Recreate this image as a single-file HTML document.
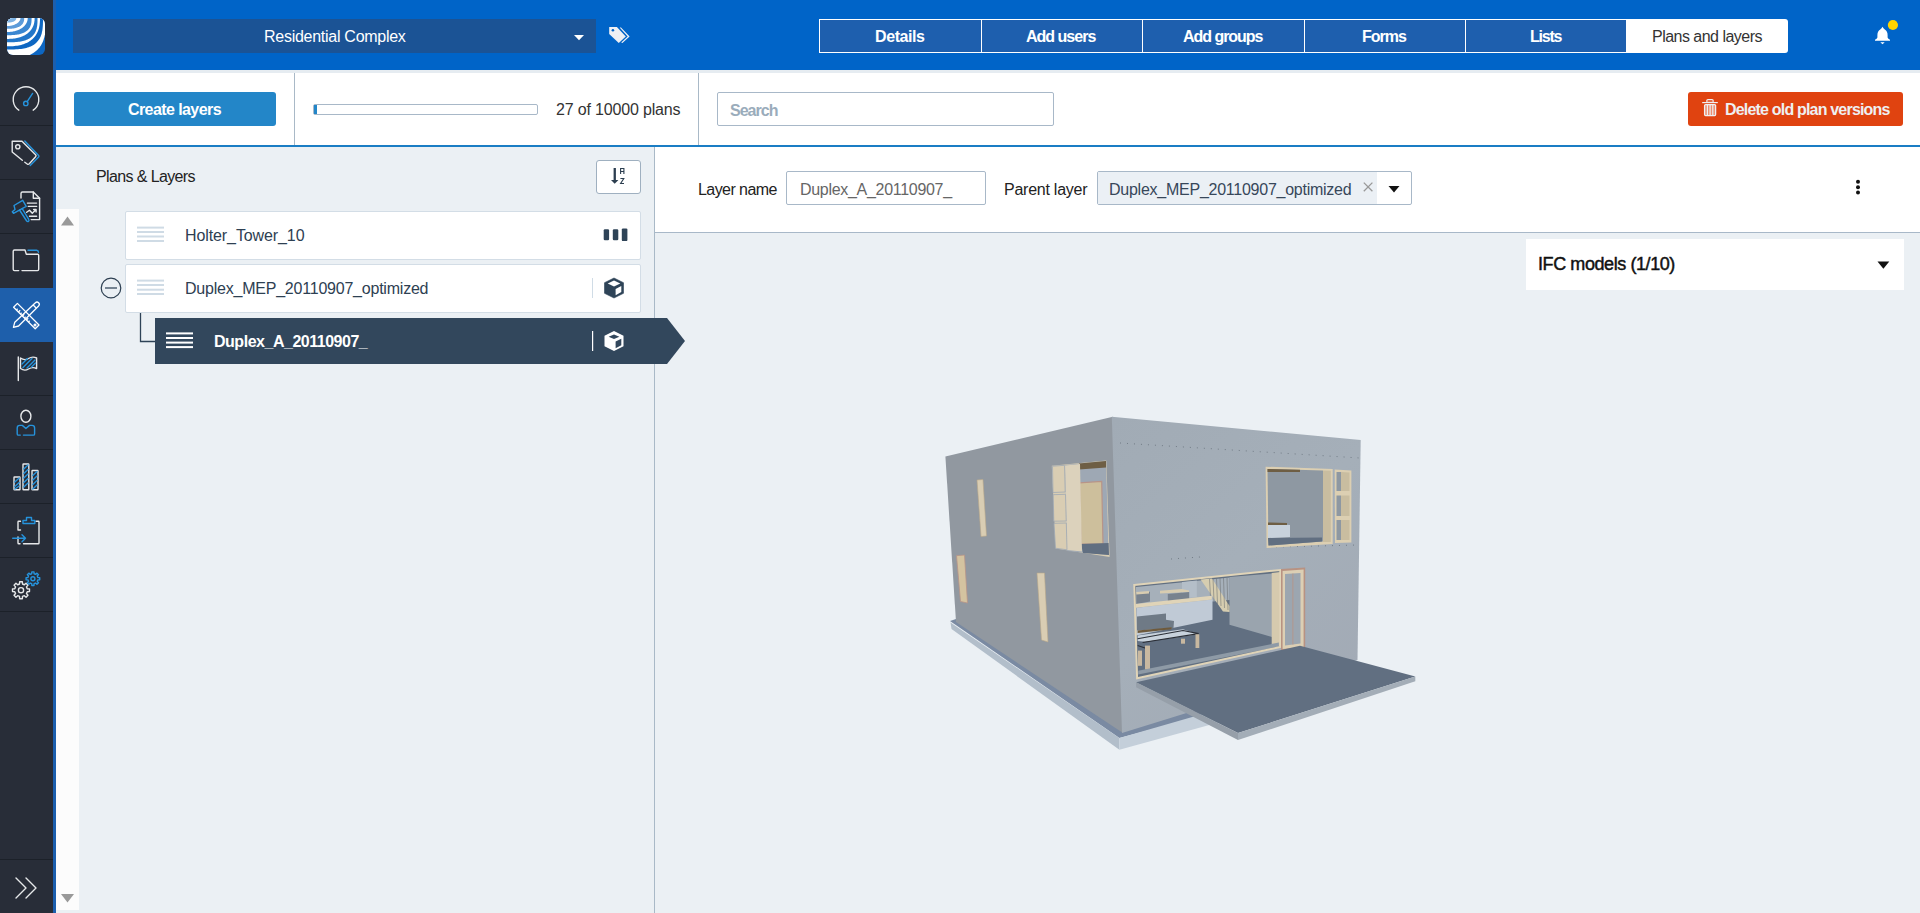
<!DOCTYPE html>
<html><head><meta charset="utf-8">
<style>
*{box-sizing:border-box;margin:0;padding:0}
html,body{width:1920px;height:913px;overflow:hidden;background:#ebf0f4;font-family:"Liberation Sans",sans-serif;color:#222}
.a{position:absolute}
.t{position:absolute;white-space:nowrap;font-size:16px;line-height:16px}
.tab{position:absolute;top:19px;height:34px;border:1px solid #fff;background:#1e5fae}
.tt{position:absolute;top:29px;white-space:nowrap;font-size:16px;line-height:16px;color:#fff;font-weight:bold}
.vdiv{position:absolute;width:1px;background:#a9b9c7}
.row{position:absolute;left:125px;width:516px;background:#fff;border:1px solid #d3dde6;border-radius:2px}
.hl{position:absolute;height:2px;background:#cfdbe5}
svg{position:absolute;overflow:visible}
</style></head><body>
<!-- sidebar -->
<div class="a" style="left:0;top:0;width:53px;height:913px;background:#282d38"></div>
<div class="a" style="left:53px;top:0;width:3px;height:913px;background:#1c5fae"></div>
<div class="a" style="left:0;top:288px;width:53px;height:54px;background:#1e5fab"></div>
<svg style="left:0;top:0" width="53" height="913" viewBox="0 0 53 913">
<defs><clipPath id="lc"><rect x="7" y="18" width="38" height="37" rx="6"/></clipPath></defs>
<g clip-path="url(#lc)">
<rect x="7" y="18" width="38" height="37" fill="#0d66c2"/>
<path d="M7.00 18.00 L46.00 18.00 L45.98 22.29 L45.92 24.91 L45.81 27.14 L45.67 29.13 L45.48 30.96 L45.25 32.67 L44.98 34.27 L44.67 35.80 L44.32 37.24 L43.93 38.62 L43.49 39.94 L43.02 41.20 L42.50 42.41 L41.94 43.56 L41.34 44.67 L40.70 45.73 L40.01 46.74 L39.29 47.70 L38.52 48.62 L37.71 49.50 L36.86 50.33 L35.96 51.11 L35.02 51.86 L34.03 52.56 L33.00 53.22 L31.93 53.84 L30.80 54.41 L29.62 54.94 L28.39 55.43 L27.11 55.87 L25.76 56.28 L24.35 56.64 L22.87 56.96 L21.30 57.23 L19.63 57.47 L17.85 57.66 L15.91 57.81 L13.74 57.91 L11.18 57.98 L7.00 58.00 Z" fill="#fff"/>
<path d="M7.00 18.00 L43.00 18.00 L42.98 21.90 L42.93 24.10 L42.84 25.91 L42.71 27.52 L42.55 28.97 L42.36 30.32 L42.12 31.58 L41.85 32.77 L41.55 33.89 L41.21 34.95 L40.83 35.96 L40.42 36.93 L39.97 37.84 L39.48 38.72 L38.96 39.56 L38.40 40.36 L37.80 41.12 L37.17 41.84 L36.50 42.53 L35.79 43.19 L35.04 43.81 L34.25 44.40 L33.42 44.95 L32.55 45.47 L31.64 45.96 L30.68 46.42 L29.68 46.85 L28.63 47.24 L27.53 47.60 L26.37 47.93 L25.16 48.23 L23.88 48.50 L22.52 48.73 L21.08 48.94 L19.54 49.11 L17.88 49.25 L16.05 49.36 L13.97 49.44 L11.46 49.48 L7.00 49.50 Z" fill="#0e67c2"/>
<path d="M7.00 18.00 L40.00 18.00 L39.98 20.12 L39.92 21.69 L39.82 23.10 L39.67 24.42 L39.49 25.66 L39.27 26.84 L39.01 27.97 L38.70 29.06 L38.36 30.11 L37.97 31.12 L37.55 32.10 L37.09 33.05 L36.59 33.96 L36.05 34.84 L35.47 35.68 L34.85 36.50 L34.20 37.28 L33.51 38.04 L32.78 38.76 L32.01 39.45 L31.21 40.11 L30.36 40.73 L29.49 41.33 L28.57 41.89 L27.62 42.42 L26.63 42.91 L25.61 43.37 L24.54 43.80 L23.44 44.20 L22.30 44.56 L21.12 44.89 L19.90 45.19 L18.63 45.45 L17.31 45.67 L15.93 45.86 L14.48 46.02 L12.95 46.14 L11.31 46.23 L9.48 46.28 L7.00 46.30 Z" fill="#fff"/>
<path d="M7.00 18.00 L37.50 18.00 L37.48 20.71 L37.44 22.33 L37.36 23.69 L37.24 24.91 L37.10 26.02 L36.93 27.06 L36.72 28.04 L36.48 28.96 L36.21 29.84 L35.91 30.67 L35.57 31.47 L35.20 32.23 L34.81 32.95 L34.38 33.65 L33.91 34.31 L33.42 34.95 L32.89 35.56 L32.33 36.14 L31.74 36.69 L31.11 37.21 L30.45 37.71 L29.76 38.18 L29.04 38.63 L28.27 39.05 L27.48 39.44 L26.64 39.81 L25.77 40.15 L24.86 40.47 L23.90 40.76 L22.90 41.03 L21.86 41.27 L20.76 41.49 L19.60 41.68 L18.37 41.84 L17.07 41.98 L15.67 42.10 L14.14 42.19 L12.43 42.25 L10.40 42.29 L7.00 42.30 Z" fill="#2176c9"/>
<path d="M7.00 18.00 L34.60 18.00 L34.58 19.25 L34.53 20.29 L34.43 21.25 L34.30 22.16 L34.14 23.05 L33.94 23.90 L33.70 24.72 L33.42 25.53 L33.11 26.31 L32.76 27.07 L32.38 27.80 L31.96 28.52 L31.51 29.21 L31.03 29.89 L30.51 30.54 L29.95 31.17 L29.37 31.77 L28.75 32.36 L28.10 32.92 L27.42 33.46 L26.71 33.98 L25.96 34.47 L25.19 34.94 L24.39 35.38 L23.56 35.80 L22.70 36.19 L21.81 36.56 L20.89 36.90 L19.94 37.22 L18.97 37.51 L17.97 37.77 L16.94 38.01 L15.88 38.22 L14.79 38.40 L13.66 38.55 L12.50 38.68 L11.29 38.77 L10.02 38.84 L8.65 38.89 L7.00 38.90 Z" fill="#fff"/>
<path d="M7.00 18.00 L31.60 18.00 L31.59 19.63 L31.54 20.70 L31.48 21.62 L31.38 22.46 L31.26 23.24 L31.10 23.97 L30.92 24.66 L30.72 25.32 L30.48 25.95 L30.22 26.55 L29.94 27.13 L29.62 27.69 L29.28 28.22 L28.91 28.73 L28.51 29.22 L28.09 29.69 L27.63 30.14 L27.16 30.57 L26.65 30.98 L26.12 31.37 L25.56 31.74 L24.97 32.09 L24.36 32.43 L23.71 32.74 L23.04 33.04 L22.34 33.32 L21.61 33.58 L20.85 33.82 L20.06 34.04 L19.23 34.24 L18.37 34.42 L17.47 34.58 L16.53 34.73 L15.54 34.85 L14.49 34.96 L13.38 35.05 L12.18 35.11 L10.86 35.16 L9.34 35.19 L7.00 35.20 Z" fill="#3a87d1"/>
<path d="M7.00 18.00 L27.70 18.00 L27.68 18.64 L27.64 19.24 L27.56 19.82 L27.46 20.39 L27.32 20.95 L27.15 21.50 L26.96 22.04 L26.73 22.58 L26.48 23.10 L26.20 23.61 L25.89 24.11 L25.55 24.60 L25.18 25.08 L24.78 25.54 L24.36 26.00 L23.92 26.44 L23.44 26.87 L22.95 27.28 L22.43 27.68 L21.88 28.06 L21.31 28.43 L20.72 28.79 L20.11 29.12 L19.48 29.44 L18.83 29.74 L18.16 30.03 L17.47 30.29 L16.76 30.54 L16.03 30.77 L15.29 30.98 L14.54 31.17 L13.76 31.35 L12.98 31.50 L12.18 31.63 L11.37 31.74 L10.54 31.84 L9.69 31.91 L8.83 31.96 L7.95 31.99 L7.00 32.00 Z" fill="#fff"/>
<path d="M7.00 18.00 L24.20 18.00 L24.19 18.81 L24.16 19.41 L24.10 19.95 L24.03 20.45 L23.94 20.92 L23.82 21.37 L23.68 21.81 L23.52 22.22 L23.34 22.62 L23.14 23.01 L22.92 23.38 L22.68 23.74 L22.42 24.09 L22.14 24.43 L21.84 24.75 L21.52 25.06 L21.18 25.36 L20.82 25.65 L20.44 25.92 L20.04 26.18 L19.62 26.44 L19.18 26.67 L18.72 26.90 L18.24 27.12 L17.75 27.32 L17.23 27.51 L16.70 27.68 L16.14 27.85 L15.57 28.00 L14.98 28.14 L14.36 28.26 L13.72 28.38 L13.06 28.47 L12.37 28.56 L11.65 28.63 L10.90 28.69 L10.10 28.74 L9.25 28.77 L8.29 28.79 L7.00 28.80 Z" fill="#5c9bd9"/>
<path d="M7.00 18.00 L20.50 18.00 L20.49 18.29 L20.46 18.60 L20.40 18.90 L20.33 19.21 L20.23 19.52 L20.12 19.82 L19.98 20.13 L19.82 20.43 L19.64 20.73 L19.45 21.02 L19.23 21.32 L18.99 21.60 L18.74 21.89 L18.46 22.16 L18.17 22.43 L17.86 22.70 L17.54 22.95 L17.19 23.20 L16.84 23.44 L16.46 23.68 L16.07 23.90 L15.67 24.12 L15.26 24.32 L14.83 24.52 L14.39 24.70 L13.94 24.88 L13.48 25.04 L13.01 25.20 L12.53 25.34 L12.04 25.47 L11.55 25.59 L11.05 25.69 L10.54 25.79 L10.04 25.87 L9.53 25.94 L9.01 26.00 L8.50 26.04 L7.99 26.07 L7.49 26.09 L7.00 26.10 Z" fill="#fff"/>
<path d="M7.00 18.00 L16.30 18.00 L16.29 18.28 L16.28 18.50 L16.24 18.71 L16.20 18.92 L16.14 19.11 L16.08 19.30 L16.00 19.48 L15.90 19.66 L15.80 19.83 L15.68 20.00 L15.55 20.16 L15.41 20.31 L15.26 20.47 L15.10 20.62 L14.92 20.76 L14.73 20.90 L14.54 21.03 L14.33 21.16 L14.11 21.28 L13.88 21.40 L13.64 21.52 L13.39 21.63 L13.13 21.73 L12.86 21.83 L12.58 21.92 L12.29 22.00 L11.99 22.09 L11.68 22.16 L11.36 22.23 L11.03 22.29 L10.70 22.35 L10.35 22.40 L9.99 22.45 L9.62 22.49 L9.25 22.52 L8.85 22.55 L8.45 22.57 L8.02 22.59 L7.56 22.60 L7.00 22.60 Z" fill="#7db2e3"/>
</g>
<g fill="#1c2129">
<rect x="0" y="125" width="53" height="1"/><rect x="0" y="179" width="53" height="1"/><rect x="0" y="233" width="53" height="1"/>
<rect x="0" y="395" width="53" height="1"/><rect x="0" y="449" width="53" height="1"/><rect x="0" y="503" width="53" height="1"/>
<rect x="0" y="557" width="53" height="1"/><rect x="0" y="611" width="53" height="1"/><rect x="0" y="859" width="53" height="1"/>
</g>
<g fill="none" stroke="#e6e8ea" stroke-width="1.4" stroke-linecap="round" stroke-linejoin="round">
<!-- dashboard -->
<path d="M18.8 110.2 A12.8 12.8 0 1 1 33.2 110.2"/>
<!-- tag -->
<path d="M22.3 160.3 L12.2 152 L12.2 141.2 L22 141.2 L35.6 154.8 Q36.6 155.8 35.6 156.8 L29.3 163.8 Q28.3 164.8 27.2 164 L24.8 162.2"/>
<circle cx="17.8" cy="146.8" r="2.1"/>
<!-- forms doc -->
<path d="M21 198 L21 193.5 Q21 192 22.5 192 L33.3 192 L39.6 198.2 L39.6 219.6 L31.2 219.6"/>
<path d="M33.3 192 L33.3 198.2 L39.6 198.2"/>
<path d="M27.4 203.1 L36.6 203.1 M28.3 206.4 L36.6 206.4 M29.5 216.3 L36.6 216.3"/>
<path d="M26.7 212.3 L29.5 210.2 L32.3 213.3 L36.1 209.5 M33.6 209.5 L36.1 209.5 L36.1 212"/>
<!-- folder -->
<path d="M18.7 270.6 L14.5 270.6 Q13.2 270.6 13.2 269.3 L13.2 251.3 Q13.2 250 14.5 250 L25 250 L26.3 254.2 L37.8 254.2 Q38.7 254.2 38.7 255.5 L38.7 269.3 Q38.7 270.6 37.4 270.6 L22 270.6"/>
<!-- flag -->
<path d="M18.3 357 L18.3 380.6"/>
<path d="M20.5 358 Q24.5 361 28.5 358.5 Q32.5 356 36.6 358 L36.6 368.5 Q32.5 366.5 28.5 369 Q24.5 371.5 20.5 368.5 Z"/>
<!-- person head -->
<ellipse cx="25.9" cy="416.3" rx="5" ry="6"/>
<!-- chart bars -->
<rect x="14" y="477" width="6" height="12.8" rx="0.5"/>
<rect x="23" y="464" width="5.8" height="25.8" rx="0.5"/>
<rect x="32" y="470.5" width="6" height="19.3" rx="0.5"/>
<!-- clipboard -->
<path d="M20.5 530 L18 530 L18 522 Q18 521.3 18.7 521.3 L20.5 521.3 M18 537 L18 543 Q18 543.8 18.8 543.8 L20 543.8 M23.5 543.8 L38.2 543.8 Q39 543.8 39 543 L39 522 Q39 521.3 38.3 521.3 L36 521.3"/>
<!-- big gear -->
<circle cx="21" cy="590.2" r="2.6"/>
<path d="M29.49 588.85 L29.49 591.55 L27.22 591.69 L26.46 593.54 L27.96 595.25 L26.05 597.16 L24.34 595.66 L22.49 596.42 L22.35 598.69 L19.65 598.69 L19.51 596.42 L17.66 595.66 L15.95 597.16 L14.04 595.25 L15.54 593.54 L14.78 591.69 L12.51 591.55 L12.51 588.85 L14.78 588.71 L15.54 586.86 L14.04 585.15 L15.95 583.24 L17.66 584.74 L19.51 583.98 L19.65 581.71 L22.35 581.71 L22.49 583.98 L24.34 584.74 L26.05 583.24 L27.96 585.15 L26.46 586.86 L27.22 588.71 Z"/>
<!-- chevrons -->
<path d="M16 878 L26 888 L16 898 M26 878 L36 888 L26 898"/>
</g>
<g fill="none" stroke="#2693dc" stroke-width="1.4" stroke-linecap="round" stroke-linejoin="round">
<!-- needle -->
<path d="M27.2 101.6 L32.6 93.4"/>
<circle cx="25.8" cy="103.4" r="2.2"/>
<!-- tag blue -->
<path d="M24.8 141 L38.6 155.6 Q39.3 156.3 38.6 157 L30.2 165.6"/>
<!-- hammer -->
<path d="M14 205.5 L22.7 200.3 L26.2 206.4 L13.5 213.3 L12.3 211.8 L15 209.4 Z"/>
<path d="M19.5 210 L26.7 221 Q27.6 222 28.6 221.2 Q29.4 220.4 28.7 219.4 L22.2 208.6"/>
<!-- folder blue -->
<path d="M28 250.3 L36.6 250.3 Q38.4 250.5 38.5 252.2"/>
<!-- flag hatching -->
<path d="M22 364 L27.5 358.5 M23 367.5 L32 358.5 M27 368 L35 360 M31.5 367 L35.5 363"/>
<!-- person body -->
<path d="M23.4 435.1 L33.4 435.1 Q34.6 435.1 34.6 433.9 L34.6 428 Q34.6 425.4 32 425.4 L29.5 425.4 L25.9 428.5 L22.3 425.4 L19.8 425.4 Q17.2 425.4 17.2 428 L17.2 433.9 Q17.2 435.1 18.4 435.1 L20.3 435.1"/>
<!-- chart hatching -->
<path d="M14.8 482 L19.2 478 M14.8 486.5 L19.2 482.5 M15 489 L19.2 486 M23.8 469 L28 465 M23.8 473.5 L28 469.5 M23.8 478 L28 474 M23.8 482.5 L28 478.5 M23.8 487 L28 483 M32.8 475.5 L37 471.5 M32.8 480 L37 476 M32.8 484.5 L37 480.5 M32.8 489 L37 485"/>
<!-- clipboard clip & arrow -->
<path d="M23 523.5 L23 520.5 L26.5 520.5 L26.5 517.5 L31.5 517.5 L31.5 520.5 L34.8 520.5 L34.8 523.5 Z"/>
<path d="M12.7 538.3 L25.5 538.3 M22 534.8 L25.5 538.3 L22 541.8"/>
<!-- small gear -->
<circle cx="32.9" cy="578.7" r="2"/>
<path d="M39.72 577.62 L39.72 579.78 L37.86 579.89 L37.25 581.36 L38.48 582.76 L36.96 584.28 L35.56 583.05 L34.09 583.66 L33.98 585.52 L31.82 585.52 L31.71 583.66 L30.24 583.05 L28.84 584.28 L27.32 582.76 L28.55 581.36 L27.94 579.89 L26.08 579.78 L26.08 577.62 L27.94 577.51 L28.55 576.04 L27.32 574.64 L28.84 573.12 L30.24 574.35 L31.71 573.74 L31.82 571.88 L33.98 571.88 L34.09 573.74 L35.56 574.35 L36.96 573.12 L38.48 574.64 L37.25 576.04 L37.86 577.51 Z"/>
</g>
<!-- ruler & pencil (active) -->
<g fill="none" stroke="#fff" stroke-width="1.3" stroke-linejoin="round">
<path d="M13.6 307.2 L17.4 303.4 L39 325 L35.2 328.8 Z"/>
<path d="M16.4 310 L17.6 308.8 M18.4 312 L20.2 310.2 M20.4 314 L21.6 312.8 M22.4 316 L24.2 314.2 M24.4 318 L25.6 316.8 M26.4 320 L28.2 318.2 M28.4 322 L29.6 320.8"/>
<circle cx="35" cy="325" r="0.9"/>
<path d="M35.4 302.8 Q37 301.2 38.6 302.8 Q40.2 304.4 38.6 306 L18.6 326 L13.4 327.4 L14.8 322.2 Z"/>
<path d="M33.2 305 L36.4 308.2"/>
</g>
</svg>
<!-- header -->
<div class="a" style="left:56px;top:0;width:1864px;height:70px;background:#0064c8"></div>
<div class="a" style="left:73px;top:19px;width:523px;height:34px;background:#1b5395"></div>
<div class="t" style="left:264px;top:29px;color:#fff;letter-spacing:-0.27px">Residential Complex</div>
<div class="tab" style="left:819px;width:163px"></div>
<div class="tab" style="left:981px;width:162px"></div>
<div class="tab" style="left:1142px;width:163px"></div>
<div class="tab" style="left:1304px;width:162px"></div>
<div class="tab" style="left:1465px;width:162px"></div>
<div class="a" style="left:1626px;top:19px;width:162px;height:34px;background:#fff;border-radius:0 3px 3px 0"></div>
<div class="tt" style="left:875px;letter-spacing:-0.41px">Details</div>
<div class="tt" style="left:1026px;letter-spacing:-0.99px">Add users</div>
<div class="tt" style="left:1183px;letter-spacing:-1.03px">Add groups</div>
<div class="tt" style="left:1362px;letter-spacing:-1px">Forms</div>
<div class="tt" style="left:1530px;letter-spacing:-1.21px">Lists</div>
<div class="tt" style="left:1652px;color:#333;font-weight:normal;letter-spacing:-0.52px">Plans and layers</div>
<!-- toolbar -->
<div class="a" style="left:56px;top:70px;width:1864px;height:3px;background:#e6ecf1"></div>
<div class="a" style="left:56px;top:73px;width:1864px;height:72px;background:#fff"></div>
<div class="a" style="left:56px;top:145px;width:1864px;height:2px;background:#1a7dc4"></div>
<div class="vdiv" style="left:294px;top:73px;height:72px"></div>
<div class="vdiv" style="left:698px;top:73px;height:72px"></div>
<div class="a" style="left:74px;top:92px;width:202px;height:34px;background:#2386c8;border-radius:3px"></div>
<div class="t" style="left:128px;top:102px;color:#fff;font-weight:bold;letter-spacing:-0.58px">Create layers</div>
<div class="a" style="left:313px;top:104px;width:225px;height:11px;border:1px solid #a8b8c8;border-radius:2px;background:#fff"><div class="a" style="left:0;top:0;width:3px;height:9px;background:#2386c8"></div></div>
<div class="t" style="left:556px;top:102px;color:#333;letter-spacing:-0.17px">27 of 10000 plans</div>
<div class="a" style="left:717px;top:92px;width:337px;height:34px;border:1px solid #a8b8c8;border-radius:2px;background:#fff"></div>
<div class="t" style="left:730px;top:103px;color:#9aacbb;font-weight:bold;letter-spacing:-0.98px">Search</div>
<div class="a" style="left:1688px;top:92px;width:215px;height:34px;background:#e04310;border-radius:3px"></div>
<div class="t" style="left:1725px;top:102px;color:#eef0f2;font-weight:bold;letter-spacing:-0.81px">Delete old plan versions</div>

<!-- left panel -->
<div class="a" style="left:56px;top:209px;width:23px;height:701px;background:#fcfcfc"></div>
<div class="vdiv" style="left:654px;top:147px;height:766px"></div>
<div class="t" style="left:96px;top:169px;color:#222;letter-spacing:-0.62px">Plans &amp; Layers</div>
<div class="a" style="left:596px;top:160px;width:45px;height:34px;background:#fff;border:1px solid #9fb0c0;border-radius:3px"></div>

<div class="row" style="top:211px;height:49px"></div>
<div class="row" style="top:264px;height:49px"></div>
<div class="t" style="left:185px;top:228px;color:#2e4052;letter-spacing:-0.1px">Holter_Tower_10</div>
<div class="t" style="left:185px;top:281px;color:#2e4052;letter-spacing:-0.22px">Duplex_MEP_20110907_optimized</div>

<!-- right header -->
<div class="a" style="left:655px;top:147px;width:1265px;height:86px;background:#fff;border-bottom:1px solid #a8b8c8"></div>
<div class="t" style="left:698px;top:182px;color:#222;letter-spacing:-0.56px">Layer name</div>
<div class="a" style="left:786px;top:171px;width:200px;height:34px;border:1px solid #a8b8c8;border-radius:2px;background:#fff"></div>
<div class="t" style="left:800px;top:182px;color:#666;letter-spacing:-0.3px">Duplex_A_20110907_</div>
<div class="t" style="left:1004px;top:182px;color:#222;letter-spacing:-0.25px">Parent layer</div>
<div class="a" style="left:1097px;top:171px;width:315px;height:34px;border:1px solid #a8b8c8;border-radius:2px;background:#fff"><div class="a" style="left:0;top:0;width:279px;height:32px;background:#ebf0f5"></div></div>
<div class="t" style="left:1109px;top:182px;color:#37475a;letter-spacing:-0.25px">Duplex_MEP_20110907_optimized</div>

<div class="a" style="left:1526px;top:239px;width:378px;height:51px;background:#fff"></div>
<div class="t" style="left:1538px;top:255px;font-size:18px;line-height:18px;color:#111;-webkit-text-stroke:0.45px #111;letter-spacing:-0.42px">IFC models (1/10)</div>
<!-- house -->
<svg style="left:0;top:0" width="1920" height="913" viewBox="0 0 1920 913">
<defs>
<linearGradient id="rw" x1="1112" y1="420" x2="1360" y2="700" gradientUnits="userSpaceOnUse">
<stop offset="0" stop-color="#a1abb5"/><stop offset="0.5" stop-color="#a5afb9"/><stop offset="1" stop-color="#a2aab5"/>
</linearGradient>
</defs>
<!-- plinth -->
<path d="M950 621 L956 619 L1300 650 L1300 690 L1119.4 738 Z" fill="#7a8aa2"/>
<path d="M950.5 622.6 L1119.4 738 L1119.4 749.8 L951.5 629 Z" fill="#b2beca"/>
<path d="M1119.4 738 L1300 686 L1300 700 L1119.4 749.8 Z" fill="#c4cfda"/>
<!-- walls -->
<path d="M945.4 456.4 L1112.8 416.8 L1123 733 L956 622 Z" fill="#9198a0"/>
<path d="M1111.8 416.8 L1360.7 440 L1357.5 660 L1122 733 Z" fill="url(#rw)"/>
<!-- dotted lines -->
<g stroke="#5d6670" stroke-width="1" stroke-dasharray="1 6" fill="none" opacity="0.7">
<path d="M1120 443 L1360 458"/>
<path d="M1171 559 L1200 557"/>
<path d="M1276 547 L1358 545"/>
</g>
<!-- left wall slits -->
<g fill="#d9cdb3" stroke="#b8a88a" stroke-width="0.6">
<path d="M977 480 L983 479.5 L986.5 536 L981 536.5 Z"/>
<path d="M1037 573 L1044.5 573 L1048 642 L1041.5 640 Z"/>
</g>
<path d="M956.5 555.7 L964.5 555 L967.5 603 L960.5 601.5 Z" fill="#d4c3a0" stroke="#b89488" stroke-width="0.8"/>
<!-- left upper window -->
<path d="M1051.8 465.8 L1106.3 460.5 L1109.6 557 L1055.8 548.5 Z" fill="#d9ceb4"/>
<path d="M1065 465 L1106 461 L1108.6 555 L1067 551 Z" fill="#9ea8b4"/>
<path d="M1079.4 482.8 L1101.7 481.5 L1103 544 L1081 544 Z" fill="#cdbf9c" stroke="#b89488" stroke-width="1.2"/>
<path d="M1081 544 L1108.6 543 L1109 555 L1083 553 Z" fill="#616f81"/>
<path d="M1079 463.5 L1106 461 L1106 467.5 L1079 469.5 Z" fill="#6e5e44"/>
<path d="M1065 465.5 L1080 464 L1082 551.5 L1067 550 Z" fill="#dcd2bc"/>
<g fill="#d9cdb3" stroke="#9ea8b4" stroke-width="0.8">
<path d="M1052.5 466.2 L1064.5 465.3 L1065.2 492 L1053 492.5 Z"/>
<path d="M1053.2 494.7 L1065.5 494.3 L1066.2 521 L1053.8 521.2 Z"/>
<path d="M1054 523.3 L1066.3 523 L1067 549.8 L1055.5 548.2 Z"/>
</g>
<!-- right upper window -->
<path d="M1265.6 466.7 L1332.7 469 L1332.7 544 L1266.6 548 Z" fill="#dccfb2"/>
<path d="M1267.5 469 L1323 470.5 L1323 541.5 L1268.5 545.5 Z" fill="#8e98a2"/>
<path d="M1267.5 469 L1300 469.8 L1300 472 L1267.5 472 Z" fill="#6e5e44"/>
<path d="M1268 538 L1322 537.5 L1322 541.5 L1268.5 545.5 Z" fill="#616f81"/>
<path d="M1268 524 L1290 525 L1290 537 L1268 538 Z" fill="#c8d2dc"/>
<path d="M1268 522.5 L1287 523 L1287 525 L1268 525 Z" fill="#6e5e44"/>
<path d="M1323 470.5 L1330.8 470.8 L1330.8 542 L1323 542 Z" fill="#c9bda0"/>
<path d="M1334.7 469.4 L1351.4 470.5 L1351.4 542.5 L1335 543 Z" fill="#dccfb2"/>
<g fill="#8e98a2">
<path d="M1336.5 472 L1341 472 L1341 491 L1336.5 491 Z"/>
<path d="M1336.5 495.5 L1341 495.5 L1341 516 L1336.5 516 Z"/>
<path d="M1336.5 520 L1341 520 L1341 540 L1336.5 540 Z"/>
</g>
<g fill="#c9bda0">
<path d="M1341 472 L1349.5 472.5 L1349.5 491 L1341 491 Z"/>
<path d="M1341 495.5 L1349.5 495.5 L1349.5 516 L1341 516 Z"/>
<path d="M1341 520 L1349.5 520 L1349.5 540 L1341 540 Z"/>
</g>
<!-- lower opening -->
<path d="M1134.3 585 L1280.3 570 L1280.3 646.9 L1137.1 678.2 Z" fill="#616f81"/>
<path d="M1136 587 L1229.7 577.5 L1229.7 600 L1136 608 Z" fill="#a6b0ba"/>
<path d="M1182 582 L1196.8 580.5 L1196.8 597 L1182 598.5 Z" fill="#b4bec8"/>
<path d="M1229.5 577 L1272 573.5 L1272 637 L1229.5 624.8 Z" fill="#9aa4ae"/>
<path d="M1136.3 607.8 L1212.5 599.6 L1212.5 619.8 L1136.3 635.5 Z" fill="#c0cad6"/>
<path d="M1200.6 579.5 L1212 578.5 L1229.5 606 L1229.5 612 L1223 611.6 Z" fill="#d6cdb0"/>
<g stroke="#6b6e70" stroke-width="0.6" fill="none" opacity="0.9">
<path d="M1209.5 579 L1210.5 597 M1213 578.5 L1214 601 M1216.5 578.5 L1217.5 604 M1220 578 L1221 606 M1223.5 578 L1224.5 608 M1227 578 L1228 610"/>
</g>
<path d="M1136.3 593.3 L1150 591.8 L1150 601.5 L1136.3 604 Z" fill="#78828e"/>
<path d="M1136.3 592 L1149 591 L1149 593.5 L1136.3 594.5 Z" fill="#d8ccb0"/>
<path d="M1160 590.8 L1181.7 589 L1189 590.5 L1189 592 L1160 593.5 Z" fill="#d8ccb0"/>
<path d="M1167.8 594 L1189.2 592 L1189.2 599.6 L1167.8 601.5 Z" fill="#78828e"/>
<path d="M1135.7 604 L1211.9 595.8 L1211.9 599.6 L1135.7 607.8 Z" fill="#e0d4b8"/>
<path d="M1137 616.6 L1166 613.5 L1166 619.8 L1174 621 L1173.5 628 L1137 630.5 Z" fill="#6f7a86"/>
<path d="M1137.6 630.5 L1171.6 627.3 L1171.6 629.2 L1137.6 633 Z" fill="#6e5a3c"/>
<path d="M1137.6 635.5 L1183 629.2 L1198.7 634.3 L1145 641.8 L1137.6 641 Z" fill="#c8d2dc"/>
<path d="M1137.6 638.7 L1183 630.5 L1198.7 633.6 M1142.6 642.5 L1198.7 633.6" fill="none" stroke="#2a2e36" stroke-width="1.1"/>
<path d="M1137.6 645.5 L1148 649" stroke="#2a2e36" stroke-width="1.1"/>
<g fill="#c8b8a0">
<rect x="1195.5" y="634.3" width="3.8" height="13.7"/><rect x="1181" y="638.7" width="4" height="5"/>
<rect x="1145" y="645.6" width="5" height="24"/><rect x="1138" y="650.6" width="4" height="15.2"/>
</g>
<path d="M1271.7 573 L1280.3 572 L1280.3 646 L1271.7 647 Z" fill="#d6caae"/>
<path d="M1138.2 670.8 L1278.9 642.5 L1278.9 646.5 L1138.2 674.6 Z" fill="#8e9aa6"/>
<path d="M1134.3 585 L1280.3 570 L1280.3 646.9 L1137.1 678.2 Z" fill="none" stroke="#e0d4b8" stroke-width="2"/>
<!-- door -->
<path d="M1281 569 L1305.2 567.5 L1305.2 648.5 L1281 650.5 Z" fill="#b89282"/>
<path d="M1282.6 571 L1303.6 569.5 L1303.6 647 L1282.6 649 Z" fill="#dccfb4"/>
<path d="M1285 574 L1300.5 573 L1300.5 643.5 L1285 645.5 Z" fill="#9ca6b0"/>
<rect x="1292.5" y="573.5" width="0.8" height="71" fill="#b89282"/>
<!-- porch -->
<path d="M1136.1 682.3 L1300 645.7 L1415.3 676.4 L1238 733 Z" fill="#616f81"/>
<path d="M1136.1 682.3 L1238 733 L1238 740 L1136.1 687.2 Z" fill="#969fa9"/>
<path d="M1238 733 L1415.3 676.4 L1415.3 681.2 L1238 740 Z" fill="#a3adb7"/>
</svg>
<!-- header icons -->
<svg style="left:0;top:0" width="1920" height="913" viewBox="0 0 1920 913">
<path d="M574 35 L584 35 L579 40.3 Z" fill="#fff"/>
<path d="M609.2 27.1 L616.9 27.1 L625.8 36.5 L618.75 43 L609.2 34 Z" fill="#eef0f4"/>
<circle cx="612.9" cy="30.3" r="1.3" fill="#0064c8"/>
<path d="M619.6 27.6 L621 27.6 L629.6 36.5 L622.4 43 L621.2 42.4 L627.7 36.5 Z" fill="#eef0f4"/>
<path d="M1882.5 26.8 Q1883.3 28.6 1884.8 29.6 Q1887.6 31.4 1887.6 35.2 L1887.6 37.6 Q1888 39 1890 39.8 L1890 40.8 L1875 40.8 L1875 39.8 Q1877 39 1877.4 37.6 L1877.4 35.2 Q1877.4 31.4 1880.2 29.6 Q1881.7 28.6 1882.5 26.8 Z" fill="#fff"/>
<path d="M1880.3 42.2 L1884.7 42.2 L1882.5 44.2 Z" fill="#fff"/>
<circle cx="1892.9" cy="25" r="5.1" fill="#ffd400"/>
<!-- trash -->
<rect x="1704.6" y="104.6" width="11" height="11" rx="1" fill="rgba(255,255,255,0.4)" stroke="#eef0f2" stroke-width="1.3"/>
<g fill="none" stroke="#eef0f2" stroke-width="1.2">
<path d="M1702.2 102.6 L1717.8 102.6"/>
<rect x="1706.8" y="99.6" width="6.4" height="2.8" rx="1.2"/>
<path d="M1707.4 105 L1707.4 115 M1710.1 105 L1710.1 115 M1712.8 105 L1712.8 115"/>
</g>
<!-- sort icon -->
<g fill="#2c3e50">
<rect x="613.6" y="168" width="2.3" height="12.6"/>
<path d="M611 180 L618.4 180 L614.7 183.8 Z"/>
</g>
<g fill="none" stroke="#2c3e50" stroke-width="1.1">
<path d="M620.6 174 L620.6 168.5 L623.9 168.5 L623.9 174 M620.6 171.5 L623.9 171.5"/>
<path d="M620.4 178.5 L623.8 178.5 L620.6 183.5 L624 183.5"/>
</g>
<!-- drag handles -->
<g fill="#cfdbe5">
<rect x="137" y="226.6" width="27" height="2"/><rect x="137" y="231" width="27" height="2"/><rect x="137" y="235.5" width="27" height="2"/><rect x="137" y="240" width="27" height="2"/>
<rect x="137" y="279.6" width="27" height="2"/><rect x="137" y="284" width="27" height="2"/><rect x="137" y="288.7" width="27" height="2"/><rect x="137" y="293" width="27" height="2"/>
</g>
<!-- minus circle -->
<circle cx="111" cy="288" r="9.8" fill="none" stroke="#2c3e50" stroke-width="1.2"/>
<rect x="105" y="287.2" width="12" height="1.6" fill="#5a6a7a"/>
<!-- bars -->
<g fill="#2e4357">
<rect x="603.7" y="229.2" width="5.4" height="11.1" rx="1.2"/>
<rect x="612.8" y="229.2" width="5.5" height="11.1" rx="1.2"/>
<rect x="621.8" y="228.4" width="5.6" height="12.7" rx="1.2"/>
</g>
<!-- row2 separator & cube -->
<rect x="592" y="278" width="1" height="20" fill="#d0dce6"/>
<g transform="translate(614,288)">
<path d="M0 -10 L9.5 -5.3 L9.5 5.3 L0 10 L-9.5 5.3 L-9.5 -5.3 Z" fill="#2e4357" stroke="#2e4357" stroke-width="0.6" stroke-linejoin="round"/>
<path d="M0 -7.4 L6.3 -4.4 L0 -1.6 L-6.3 -4.4 Z" fill="#fff"/>
<path d="M1.6 0.9 L7.3 -1.9 L7.3 4.1 L1.6 7.2 Z" fill="#fff"/>
</g>
<!-- tree connector -->
<path d="M140.5 313 L140.5 341.5 L155 341.5" fill="none" stroke="#2e4357" stroke-width="1.3"/>
<!-- selected row -->
<path d="M155 318 L667 318 L685 341 L667 364 L155 364 Z" fill="#32475c"/>
<g fill="#fff">
<rect x="166" y="332.4" width="27" height="2"/><rect x="166" y="337" width="27" height="2"/><rect x="166" y="341.6" width="27" height="2"/><rect x="166" y="346.1" width="27" height="2"/>
</g>
<rect x="592" y="331" width="1.2" height="20" fill="#fff"/>
<g transform="translate(614,341)">
<path d="M0 -10 L9.5 -5.3 L9.5 5.3 L0 10 L-9.5 5.3 L-9.5 -5.3 Z" fill="#fff"/>
<path d="M0 -6.6 L5.4 -4.3 L0 -2 L-5.4 -4.3 Z" fill="#32475c"/>
<path d="M1.6 0.6 L7.3 -2.2 L7.3 4.3 L1.6 7.2 Z" fill="#32475c"/>
</g>
<!-- scroll arrows -->
<path d="M61 225.5 L74 225.5 L67.5 216.5 Z" fill="#999"/>
<path d="M61 894 L74 894 L67.5 902.5 Z" fill="#999"/>
<!-- select x and caret -->
<path d="M1363.8 182.6 L1372.4 191.2 M1372.4 182.6 L1363.8 191.2" stroke="#999" stroke-width="1.3"/>
<path d="M1388.5 186 L1399.5 186 L1394 192.5 Z" fill="#111"/>
<!-- kebab -->
<g fill="#111"><circle cx="1858" cy="181.8" r="2"/><circle cx="1858" cy="187.2" r="2"/><circle cx="1858" cy="192.6" r="2"/></g>
<!-- IFC caret -->
<path d="M1877.5 261.5 L1889.3 261.5 L1883.4 268.8 Z" fill="#111"/>
</svg>
<div class="t" style="left:214px;top:334px;color:#fff;font-weight:bold;letter-spacing:-0.48px">Duplex_A_20110907_</div>
</body></html>
